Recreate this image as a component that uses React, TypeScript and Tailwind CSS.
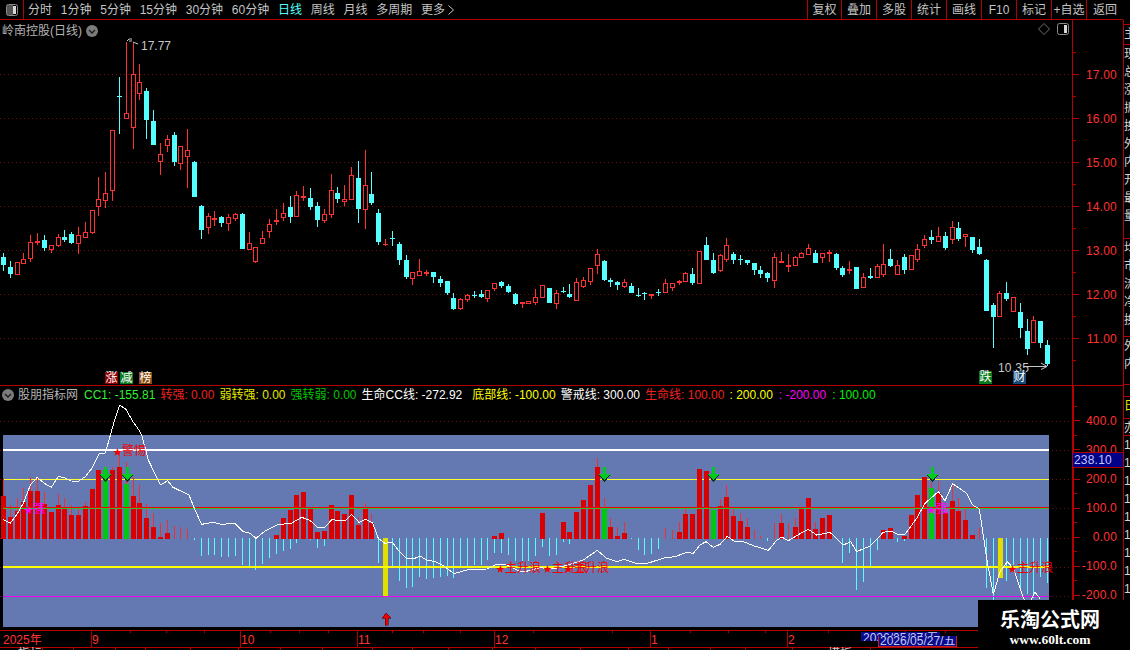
import React from "react";

// candles: [kind, bodyTop, bodyBottom, high, low], y values read at 3x from the price pane
type Candle = ["r" | "c", number, number, number, number];

const seg1: Candle[] = [
  ["c",681,705,670,722],["c",711,732,693,744],["r",697,735,697,735],["r",688,701,669,701],["r",637,686,615,695],["r",634,640,609,645],
  ["c",630,654,615,663],["r",646,660,646,668],["r",622,647,613,650],["c",621,630,600,636],["c",612,639,606,642],["r",615,641,591,672],
  ["r",606,623,576,623],["r",541,608,541,612],["r",507,530,441,558],["r",490,512,426,534],["r",301,482,301,513],["c",199,201,141,312],
  ["r",250,266,36,266],["r",133,293,40,357],["r",157,193,102,210],["c",183,270,175,327],["c",273,345,240,345],["r",373,395,339,435],
  ["r",328,347,315,366],["c",315,396,306,408],["r",349,401,349,420],["r",361,380,297,474],["c",396,501,393,501],["c",528,600,525,627],
  ["r",559,593,549,612],["r",565,571,543,588],["c",561,579,558,591],["r",562,581,552,603],["r",553,567,549,573],["c",552,657,549,657],
  ["r",640,659,606,660],["r",652,697,650,699],["r",625,641,603,641],["r",583,605,567,624],["r",571,575,537,585],
];
const seg2: Candle[] = [
  ["r",250,263,220,273],["c",231,261,198,279],["r",196,260,183,260],["r",199,203,168,213],["c",204,231,174,240],["c",228,270,216,291],
  ["r",252,273,237,279],["r",181,254,132,264],["c",189,207,171,219],["r",208,216,165,228],["r",136,209,111,209],["c",144,237,93,279],
  ["r",166,239,60,297],["c",192,219,126,225],["c",249,336,237,345],["r",343,345,327,347],["c",324,326,303,348],["c",342,390,336,405],
  ["c",390,441,375,447],["r",427,446,427,465],["r",424,437,387,437],["r",427,433,421,438],["c",426,441,426,459],["c",447,459,438,471],
  ["c",453,489,453,495],["c",504,537,489,540],["r",508,537,504,540],["r",495,510,492,516],["c",495,497,483,504],["c",492,501,480,504],
  ["r",481,506,481,516],["r",460,476,460,483],["c",456,468,453,474],["c",468,486,462,489],["c",492,522,489,525],["r",515,521,515,534],
  ["r",514,521,512,522],["r",502,518,477,525],["r",466,503,466,503],["c",474,519,474,519],["r",490,521,480,537],
];
const seg3: Candle[] = [
  ["c",214,216,201,219],["c",222,231,192,234],["r",187,242,174,242],["r",181,201,171,204],["r",145,185,145,195],["r",103,137,87,162],
  ["c",123,180,120,183],["c",180,186,174,201],["c",186,195,183,210],["r",187,201,177,204],["c",198,219,189,219],["c",226,228,204,231],
  ["c",218,220,216,240],["r",221,227,221,237],["c",217,219,207,228],["r",190,218,177,218],["r",190,204,190,213],["r",184,190,180,195],
  ["r",160,185,156,185],["c",162,189,144,195],["r",93,191,93,191],["c",75,120,51,120],["c",120,159,99,162],["r",106,153,103,156],
  ["r",76,120,54,126],["c",102,120,96,132],["c",118,120,105,135],["c",120,129,120,135],["c",129,150,129,165],["c",150,162,138,174],
  ["c",159,174,156,186],["r",112,182,99,204],["r",124,128,96,129],["r",136,140,102,156],["r",112,137,109,137],["r",100,113,97,113],
  ["r",85,104,72,106],["c",99,129,90,129],["r",100,114,100,129],["r",96,101,90,126],["c",102,144,99,150],
];
const seg4: Candle[] = [
  ["c",174,195,168,201],["r",178,182,153,192],["c",171,237,171,237],["r",202,233,190,233],["c",199,204,174,207],["r",169,203,163,203],
  ["r",163,194,102,201],["c",147,168,117,171],["r",166,194,151,194],["c",141,180,132,192],["r",136,179,136,179],["r",118,149,102,156],
  ["r",88,109,75,114],["c",81,90,60,102],["r",79,95,51,95],["c",78,114,66,120],["r",52,89,33,101],["c",54,87,36,93],["r",72,80,72,110],
  ["c",81,120,81,129],["c",111,132,87,135],["c",150,303,147,303],["c",285,321,279,414],["r",250,320,244,320],["c",249,267,216,273],
  ["r",262,305,262,305],["c",306,354,279,384],["c",363,417,327,435],["r",330,400,318,400],["c",333,399,333,414],["c",405,462,390,468],
];

const candles: Candle[] = [
  ...seg1.map((c) => shift(c, 30)),
  ...seg2.map((c) => shift(c, 130)),
  ...seg3.map((c) => shift(c, 220)),
  ...seg4.map((c) => shift(c, 210)),
];

function shift(c: Candle, off: number): Candle {
  return [c[0], off + c[1] / 3, off + c[2] / 3, off + c[3] / 3, off + c[4] / 3];
}

// indicator bars: [redTop, wickTop, cyanBottom], 3x y from the top of the blue panel
const bars: number[][] = [
  [183,130,0],[246,210,0],[228,190,0],[202,160,0],[168,125,0],[168,130,0],[207,170,0],[231,0,0],[210,178,0],[222,190,0],
  [240,210,0],[240,222,0],[213,200,0],[162,0,0],[105,0,0],[105,0,0],[105,95,0],[96,50,0],[147,82,0],[183,125,0],
  [204,150,0],[249,208,0],[276,233,0],[306,264,0],[294,255,0],[0,274,0],[0,276,0],[0,282,0],[0,0,315],[0,0,363],
  [0,0,360],[0,0,360],[0,0,366],[0,0,366],[0,0,363],[0,0,390],[0,0,393],[0,0,405],[0,0,387],[0,0,369],
  [300,0,357],[249,0,348],[225,0,342],[180,0,324],[171,0,0],[222,0,315],[291,0,339],[288,0,333],[210,0,0],[228,0,0],
  [237,0,0],[180,0,0],[270,245,0],[222,204,0],[264,238,0],[0,0,384],[0,0,0],[0,0,393],[0,0,438],[0,0,458],
  [0,0,455],[0,0,425],[0,0,432],[0,0,428],[0,0,425],[0,0,422],[0,0,430],[0,0,400],[0,0,392],[0,0,390],
  [0,0,390],[0,0,375],[303,0,355],[294,0,355],[0,0,360],[0,0,378],[0,0,378],[0,0,378],[0,0,363],[234,0,336],
  [0,0,363],[0,0,360],[261,0,320],[291,0,327],[231,0,0],[195,0,0],[150,0,0],[96,70,0],[220,190,0],[276,250,0],
  [303,276,0],[294,261,0],[0,0,312],[0,0,345],[0,0,360],[0,0,357],[0,0,342],[0,280,0],[0,285,0],[291,261,0],
  [237,222,0],[237,0,0],[102,0,0],[108,0,0],[225,0,0],[213,192,0],[186,150,0],[243,222,0],[258,234,0],[276,249,0],
  [0,285,0],[0,303,0],[0,0,318],[0,264,0],[264,237,0],[0,264,0],[276,249,0],[222,0,0],[189,0,0],[282,261,0],
  [249,0,0],[240,0,0],[0,0,0],[0,0,384],[0,0,354],[0,0,465],[0,0,441],[0,0,393],[0,0,345],[285,0,0],
  [279,0,0],[0,0,321],[303,0,318],[240,0,0],[180,0,0],[126,0,0],[159,142,0],[174,138,0],[234,0,0],[198,150,0],
  [228,190,0],[255,222,0],[300,0,0],[0,279,0],[0,0,460],[0,0,495],[0,0,0],[0,0,438],[0,0,390],[0,0,460],
  [0,0,477],[0,0,490],[0,0,425],[0,0,445],
];

const greenBars = [15, 18, 88, 104, 136];

// CC1 line, same 3x coordinates
const line1 = [
  [10,254],[31,264],[52,236],[70,205],[91,150],[112,127],[133,145],[154,157],[175,124],[193,128],[214,138],[235,139],[256,125],[277,98],
  [298,55],[316,54],[344,-45],[359,-90],[378,-77],[399,-40],[419,-12],[425,0],[445,75],[481,150],[503,137],[519,157],[567,180],[585,225],
  [605,268],[640,262],[665,268],[705,265],[730,290],[750,295],[768,310],[795,288],[830,270],[875,264],[905,247],[930,256],[952,277],
  [975,277],[995,254],[1035,258],[1055,238],[1077,262],[1097,253],[1118,264],[1135,310],[1155,325],[1177,322],[1198,350],[1220,370],
  [1240,372],[1260,363],[1280,375],[1305,380],[1330,392],[1362,416],[1400,405],[1460,402],[1490,388],[1520,390],[1560,410],
];
const line2 = [
  [15,410],[60,398],[100,402],[150,388],[190,375],[232,346],[260,370],[290,380],[312,373],[345,384],[385,384],[435,368],[465,365],[500,352],
  [520,355],[540,330],[558,320],[580,337],[600,328],[622,304],[645,320],[670,320],[700,332],[745,346],[770,316],[785,306],[805,317],
  [850,290],[865,283],[890,300],[930,292],[970,330],[992,320],[1010,350],[1050,333],[1090,292],[1115,288],[1135,300],[1155,298],
  [1190,250],[1215,205],[1255,170],[1275,197],[1298,146],[1340,175],[1358,210],[1378,222],[1400,370],[1420,478],[1440,410],[1462,380],
  [1480,400],[1510,490],[1525,510],[1545,472],[1560,490],
];
const ccPoints = [
  ...line1.map(([x, y]) => `${x / 3},${435 + y / 3}`),
  ...line2.map(([x, y]) => `${520 + x / 3},${435 + y / 3}`),
].join(" ");

const barX = (i: number) => Math.floor(3.4 + 6.825 * i);
const by = (v: number) => Math.round(435 + v / 3);

const CYAN = "#54ffff";
const RED = "#ff3232";
const GRID = "#701212";

const leftTabs = ["分时", "1分钟", "5分钟", "15分钟", "30分钟", "60分钟", "日线", "周线", "月线", "多周期", "更多"];
const rightTabs: [string, string][] = [
  ["复权", "w-[34px]"], ["叠加", "w-[35px]"], ["多股", "w-[35px]"], ["统计", "w-[35px]"], ["画线", "w-[35px]"],
  ["F10", "w-[35px]"], ["标记", "w-[35px]"], ["+自选", "w-[35px]"], ["返回", "w-[37px]"],
];
const priceTicks = [null, "17.00", null, "16.00", null, "15.00", null, "14.00", null, "13.00", null, "12.00", null, "11.00", null];
const cciTicks = [null, "400.0", null, "300.0", null, "200.0", null, "100.0", null, "0.00", null, "-100.0", null, "-200.0", null, null];

const legend: { label: string; value: string; color: string; gap?: string }[] = [
  { label: "CC1:", value: "-155.81", color: "text-[#30f030]" },
  { label: "转强:", value: "0.00", color: "text-[#f02020]" },
  { label: "弱转强:", value: "0.00", color: "text-[#e8e800]" },
  { label: "强转弱:", value: "0.00", color: "text-[#00c800]" },
  { label: "生命CC线:", value: "-272.92", color: "text-white", gap: "mr-[5px]" },
  { label: "底部线:", value: "-100.00", color: "text-[#ffff00]" },
  { label: "警戒线:", value: "300.00", color: "text-white" },
  { label: "生命线:", value: "100.00", color: "text-[#f02020]" },
  { label: ":", value: "200.00", color: "text-[#ffff00]", gap: "mr-[1px]" },
  { label: ":", value: "-200.00", color: "text-[#ff00ff]", gap: "mr-[1px]" },
  { label: ":", value: "100.00", color: "text-[#00f000]" },
];

// the quote panel is cut off at the window edge, only its left column shows
const stripRows: { h: string; chars: string[]; color?: string }[] = [
  { h: "h-[5px]", chars: [] },
  { h: "h-[20px]", chars: ["主"] },
  { h: "h-[194px]", chars: ["现", "总", "涨", "振", "换", "外", "内", "开", "最", "量"] },
  { h: "h-[98px]", chars: ["均", "市", "流", "净", "换"] },
  { h: "h-[48px]", chars: ["外", "内"] },
  { h: "h-[12px]", chars: [] },
  { h: "h-[22px]", chars: ["日"], color: "text-[#e8e800]" },
  { h: "h-[17px]", chars: ["办"] },
  { h: "h-[214px]", chars: ["1", "1", "1", "1", "1", "1", "1", "1", "1", "1"] },
];

function PanelIcon({ filled }: { filled?: boolean }) {
  return (
    <svg width="14" height="14" viewBox="0 0 14 14">
      {filled && <rect x="2" y="2" width="6" height="10" fill="#555" />}
      <rect x="1.5" y="1.5" width="11" height="11" rx="2" fill="none" stroke="#8c8c8c" />
      <rect x="8" y="3" width="3" height="8" fill="#d8d8d8" />
    </svg>
  );
}

function ChevronDot() {
  return (
    <svg width="12" height="12" viewBox="0 0 12 12">
      <circle cx="6" cy="6" r="6" fill="#7c7c7c" />
      <path d="M3 5l3 3 3-3" fill="none" stroke="#1c1c1c" strokeWidth="1.4" />
    </svg>
  );
}

function CandleMark({ c, i }: { c: Candle; i: number }) {
  const x = barX(i);
  const [kind, top, bottom, high, low] = c;
  const color = kind === "r" ? RED : CYAN;
  const t = Math.round(top);
  const b = Math.round(bottom);
  return (
    <g>
      <rect x={x} y={Math.round(high)} width="1" height={Math.max(1, Math.round(low) - Math.round(high))} fill={color} />
      {b - t <= 1 ? (
        <rect x={x - 2} y={t} width="5" height="1" fill={color} />
      ) : kind === "r" ? (
        <rect x={x - 1.5} y={t + 0.5} width="4" height={b - t - 1} fill="#000" stroke={color} />
      ) : (
        <rect x={x - 2} y={t} width="5" height={b - t} fill={color} />
      )}
    </g>
  );
}

function PricePane() {
  return (
    <div className="relative h-[365px]">
      <svg width="1072" height="365" viewBox="0 20 1072 365" shapeRendering="crispEdges" className="block">
        {[74, 118, 162, 206, 250, 294, 338].map((y) => (
          <line key={y} x1="0" x2="1072" y1={y + 0.5} y2={y + 0.5} stroke={GRID} strokeDasharray="1 3" />
        ))}
        {candles.map((c, i) => (
          <CandleMark key={i} c={c} i={i} />
        ))}
        <g shapeRendering="auto" fill="none" stroke="#c8c8c8">
          <path d="M127 41l2-2h3M129 41h3M133 42l5 2" />
          <path d="M1024 366.5h23M1041 363l6 3.500-6 3" />
        </g>
        <text x="141" y="50" fontSize="12" fill="#c8c8c8">17.77</text>
        <text x="998" y="372" fontSize="12" letterSpacing="0.2" fill="#c8c8c8">10.35</text>
      </svg>

      <div className="absolute left-[2px] top-[2px] flex items-center gap-[4px] text-[12px] text-[#b4b4b4]">
        <span>岭南控股(日线)</span>
        <ChevronDot />
      </div>
      <div className="absolute right-[2px] top-[2px] flex items-center gap-[6px]">
        <svg width="12" height="12" viewBox="0 0 12 12">
          <path d="M6 .5L11.500 6 6 11.500 .5 6z" fill="none" stroke="#6e6e6e" />
        </svg>
        <PanelIcon />
      </div>

      <span className="absolute left-[105px] top-[352px] h-[12px] w-[13px] bg-[#8c0000] text-center text-[12px] leading-[12px] text-white">涨</span>
      <span className="absolute left-[120px] top-[352px] h-[12px] w-[13px] bg-[#0a7a1e] text-center text-[12px] leading-[12px] text-white">减</span>
      <span className="absolute left-[139px] top-[352px] h-[12px] w-[13px] bg-[#8a4a10] text-center text-[12px] leading-[12px] text-white">榜</span>
      <span className="absolute left-[979px] top-[351px] h-[13px] w-[13px] bg-[#0a7a1e] text-center text-[12px] leading-[13px] text-white">跌</span>
      <span className="absolute left-[1013px] top-[351px] h-[13px] w-[13px] bg-[#164a78] text-center text-[12px] leading-[13px] text-white">财</span>
    </div>
  );
}

function Legend() {
  return (
    <div className="flex h-[20px] items-center border-t border-[#b40000] pb-[2px] pl-[2px] text-[12px]">
      <ChevronDot />
      <span className="ml-[4px] mr-[6px] text-[#b4b4b4]">股朋指标网</span>
      <div className="flex gap-[5px]">
        {legend.map((l, i) => (
          <span key={i} className={`whitespace-nowrap ${l.color} ${l.gap ?? ""}`}>
            {l.label} {l.value}
          </span>
        ))}
      </div>
    </div>
  );
}

function DownArrow({ x }: { x: number }) {
  return (
    <g>
      <path d={`M${x - 1} 467h3v7h4l-5.500 6-5.500-6h4z`} fill="#00cc20" />
      <path d={`M${x - 5} 475l5.500 6 5.500-6`} fill="none" stroke="#0a3010" />
    </g>
  );
}

function StarLabel({ x, y, text, color }: { x: number; y: number; text: string; color: string }) {
  return (
    <text x={x} y={y} fontSize="12" fill={color}>
      <tspan fontSize="9">★</tspan>
      {text}
    </text>
  );
}

function IndicatorPane() {
  return (
    <svg width="1072" height="225" viewBox="0 405 1072 225" className="block" shapeRendering="crispEdges">
      {[421, 450, 479, 508, 538, 567, 596].map((y) => (
        <line key={y} x1="0" x2="1072" y1={y + 0.5} y2={y + 0.5} stroke={GRID} strokeDasharray="1 3" />
      ))}
      <rect x="3" y="435" width="1046" height="192" fill="#6479b2" />
      <rect x="3" y="449" width="1046" height="2" fill="#fff" />
      <rect x="3" y="479" width="1046" height="1" fill="#ffff30" />

      {bars.map(([top, wick, cyan], i) => {
        const x = barX(i);
        const base = by(312);
        const green = greenBars.includes(i);
        return (
          <g key={i}>
            {cyan > 0 && <rect x={x} y={base - 1} width="1" height={by(cyan) - base + 1} fill={CYAN} />}
            {wick > 0 && <rect x={x} y={by(wick)} width="1" height={base - by(wick)} fill="#f03030" />}
            {top > 0 && <rect x={x - 2} y={by(top)} width="5" height={base - by(top)} fill={green ? "#00c810" : "#d80000"} />}
          </g>
        );
      })}

      <rect x="3" y="507" width="1046" height="1" fill="#f00000" />
      <rect x="3" y="508" width="1046" height="1" fill="#30c030" />
      <rect x="383" y="538" width="5" height="58" fill="#e0e000" />
      <rect x="3" y="566" width="1046" height="2" fill="#ffff00" />
      <rect x="998" y="538" width="5" height="40" fill="#e0e000" />
      <rect x="3" y="596" width="1046" height="1" fill="#f000f0" />

      <polyline points={ccPoints} fill="none" stroke="#fff" strokeWidth="1" />

      {[105, 127, 604, 713, 932].map((x) => (
        <DownArrow key={x} x={x} />
      ))}
      <path d="M386 613l5 5h-3v7h-3v-7h-3z" fill="#f00000" stroke="#300" strokeWidth="0.5" />

      <g shapeRendering="auto">
        <StarLabel x={113} y={455} text="警惕" color="#f00000" />
        <StarLabel x={24} y={513} text="强" color="#ff00ff" />
        <StarLabel x={927} y={513} text="强" color="#ff00ff" />
        <StarLabel x={496} y={572} text="主升浪" color="#f00000" />
        <StarLabel x={543} y={572} text="主升浪" color="#f00000" />
        <StarLabel x={564} y={572} text="主升浪" color="#f00000" />
        <StarLabel x={1008} y={572} text="主升浪" color="#f00000" />
      </g>
    </svg>
  );
}

function TimeAxis() {
  const months: [number, string][] = [[3, "2025年"], [92, "9"], [241, "10"], [358, "11"], [495, "12"], [651, "1"], [788, "2"]];
  const minor = [130, 166, 204, 270, 299, 328, 392, 423, 460, 533, 612, 690, 728, 765, 828, 905, 945, 985, 1022];
  const lower = [42, 73, 115, 145, 190, 238, 280, 322, 372, 412, 448, 492, 535, 580, 628, 668, 710, 745, 792, 834, 870];
  return (
    <div className="relative h-[20px]">
      <svg width="1072" height="20" viewBox="0 630 1072 20" className="block" shapeRendering="crispEdges">
        <rect x="0" y="630" width="1072" height="1" fill="#b40000" />
        <rect x="0" y="647" width="1072" height="1" fill="#b40000" />
        {minor.map((x) => (
          <rect key={x} x={x} y="631" width="1" height="2" fill="#b40000" />
        ))}
        {lower.map((x) => (
          <rect key={x} x={x} y="648" width="1" height="2" fill="#b40000" />
        ))}
        {months.map(([x]) =>
          x > 3 ? <rect key={x} x={x - 1} y="631" width="1" height="16" fill="#b40000" /> : null
        )}
        {months.map(([x, label]) => (
          <text key={x} x={x} y="644" fontSize="12" fill={RED} shapeRendering="auto">
            {label}
          </text>
        ))}
        <text x="18" y="658" fontSize="12" fill="#d0d0d0" shapeRendering="auto">指标</text>
        <text x="828" y="658" fontSize="12" fill="#d0d0d0" shapeRendering="auto">模板</text>
      </svg>
      <div className="absolute left-[861px] top-[2px] h-[9px] w-[79px] overflow-hidden whitespace-nowrap bg-[#0a0a8c] pl-[2px] text-[12px] leading-[13px] text-[#c4ccf0]">
        2026/05/27/五
      </div>
      <div className="absolute left-[878px] top-[6px] h-[11px] w-[79px] overflow-hidden whitespace-nowrap border-x border-b border-[#c02020] bg-[#0a0a8c] pl-[1px] text-[12px] leading-[11px] text-[#c4ccf0]">
        2026/05/27/五
      </div>
    </div>
  );
}

function AxisColumn() {
  return (
    <div className="relative w-[51px] text-[12px] text-[#ff3232]">
      <div className="h-[365px] border-l border-[#b40000] pt-[21px]">
        {priceTicks.map((t, i) => (
          <div key={i} className="flex h-[22px] items-center">
            <span className={t ? "h-px w-[6px] bg-[#b40000]" : "h-px w-[3px] bg-[#b40000]"} />
            <span className="ml-auto mr-[6px] pt-[1px] tracking-[0.2px]">{t}</span>
          </div>
        ))}
      </div>
      <div className="h-[265px] border-l-2 border-t border-[#b40000] pt-[13px]">
        {cciTicks.map((t, i) => (
          <div key={i} className="flex h-[14.56px] items-center">
            <span className={t ? "h-px w-[6px] bg-[#b40000]" : "h-px w-[3px] bg-[#b40000]"} />
            <span className="ml-auto mr-[6px] tracking-[0.2px]">{t}</span>
          </div>
        ))}
      </div>
      <div className="absolute left-[1px] top-[432px] h-[16px] w-[50px] border-y border-[#b40000] bg-[#000088] pl-[1px] leading-[14px] tracking-[0.2px] text-[#c0c8ff]">
        238.10
      </div>
    </div>
  );
}

export default function App(): JSX.Element {
  return (
    <div className="relative h-[650px] w-[1130px] overflow-hidden bg-black text-[12px] [font-family:'Liberation_Sans','Noto_Sans_CJK_SC',sans-serif]">
      <div className="flex h-[20px] w-[1123px] items-center border-b border-[#b40000] text-[#c4c4c4]">
        <div className="flex h-full w-[24px] items-center justify-center border-r border-[#b40000]">
          <PanelIcon filled />
        </div>
        <div className="ml-[4px] flex items-center gap-[8.75px]">
          {leftTabs.map((t) => (
            <span key={t} className={`flex items-center ${t === "日线" ? "text-[#54ffff]" : ""}`}>
              {t}
              {t === "更多" && (
                <svg width="8" height="10" viewBox="0 0 8 10" className="ml-[2px]">
                  <path d="M1.500 .5L6.500 5l-5 4.500" fill="none" stroke="#c4c4c4" />
                </svg>
              )}
            </span>
          ))}
        </div>
        <div className="ml-auto flex h-full">
          {rightTabs.map(([t, w]) => (
            <div key={t} className={`flex h-full items-center justify-center border-l border-[#b40000] ${w}`}>
              {t}
            </div>
          ))}
        </div>
      </div>

      <div className="flex h-[630px]">
        <div className="w-[1072px]">
          <PricePane />
          <Legend />
          <IndicatorPane />
          <TimeAxis />
        </div>
        <AxisColumn />
        <div className="h-full w-[7px] overflow-hidden border-l border-[#b40000] leading-[18px] text-[#d4d4d4]">
          {stripRows.map((r, i) => (
            <div key={i} className={`overflow-hidden border-b border-[#b40000] ${r.h} ${r.color ?? ""}`}>
              {r.chars.map((c, j) => (
                <div key={j} className="h-[18px]">
                  {c}
                </div>
              ))}
            </div>
          ))}
        </div>
      </div>

      <div className="absolute bottom-0 right-0 flex h-[50px] w-[152px] flex-col items-center bg-black pr-[8px] pt-[6px] font-bold text-white [font-family:'Liberation_Serif','Noto_Sans_CJK_SC',serif]">
        <div className="text-[20px] leading-[26px] [font-family:'Noto_Sans_CJK_SC',serif]">乐淘公式网</div>
        <div className="text-[13.5px] leading-[16px]">www.60lt.com</div>
      </div>
    </div>
  );
}
